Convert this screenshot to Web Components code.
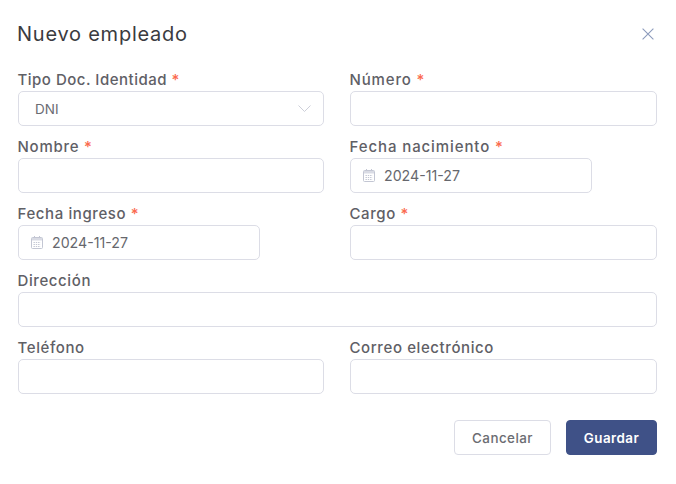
<!DOCTYPE html>
<html lang="es">
<head>
<meta charset="utf-8">
<title>Nuevo empleado</title>
<style>
html,body{margin:0;padding:0;background:#fff}
body{font-family:Inter,"Noto Sans",sans-serif;color:#5f6066}
</style>
</head>
<body>
<employee-dialog heading="Nuevo empleado">
  <form-field label="Tipo Doc. Identidad" required style="--track:.5px"><select-box value="DNI"></select-box></form-field>
  <form-field label="Número" required style="--track:.85px"><text-box></text-box></form-field>
  <form-field label="Nombre" required style="--track:.75px"><text-box></text-box></form-field>
  <form-field label="Fecha nacimiento" required style="--track:.9px"><date-box value="2024-11-27"></date-box></form-field>
  <form-field label="Fecha ingreso" required><date-box value="2024-11-27"></date-box></form-field>
  <form-field label="Cargo" required><text-box></text-box></form-field>
  <form-field label="Dirección" wide><text-box></text-box></form-field>
  <form-field label="Teléfono"><text-box></text-box></form-field>
  <form-field label="Correo electrónico"><text-box></text-box></form-field>
  <app-button slot="actions">Cancelar</app-button>
  <app-button slot="actions" primary>Guardar</app-button>
</employee-dialog>
<script>
const boxCss = `
  :host{display:block;box-sizing:border-box;height:35px;background:#fff;border:1px solid #dcdde6;border-radius:5px;}
`;
function def(name, render){
  customElements.define(name, class extends HTMLElement{
    connectedCallback(){
      if(this.shadowRoot) return;
      this.attachShadow({mode:'open'}).innerHTML = render(this);
    }
  });
}
def('employee-dialog', el => `
  <style>
    :host{display:block;box-sizing:border-box;width:676px;height:484px;padding:20px 19px 0 18px;background:#fff}
    header{display:flex;align-items:center;justify-content:space-between;height:28px;margin-bottom:11px}
    h1{margin:0 0 0 -1px;font:400 20px/28px Inter,"Noto Sans",sans-serif;color:#3a3b40;letter-spacing:.76px}
    button{all:unset;display:flex;width:18px;height:18px;align-items:center;justify-content:center}
    .grid{display:grid;grid-template-columns:306fr 307fr;column-gap:26px}
    footer{display:flex;justify-content:flex-end;gap:15px;margin-top:26px}
  </style>
  <header><h1>${el.getAttribute('heading')}</h1>
    <button aria-label="Cerrar"><svg width="12" height="12" viewBox="0 0 12 12" fill="none" stroke="#8c9bbc" stroke-width="1.1"><path d="M.6.6l10.8 10.8M11.4.6L.6 11.4"/></svg></button>
  </header>
  <div class="grid"><slot></slot></div>
  <footer><slot name="actions"></slot></footer>
`);
customElements.define('form-field', class extends HTMLElement{
  connectedCallback(){
    if(this.shadowRoot) return;
    if(this.hasAttribute('wide')) this.style.gridColumn='1 / -1';
    this.attachShadow({mode:'open'}).innerHTML = `
    <style>
      :host{display:block;height:67px}
      label{display:block;height:32px;font:500 15px/41px Inter,"Noto Sans",sans-serif;color:#5f6066;white-space:nowrap;letter-spacing:var(--track,.6px);margin-left:-.5px}
      b{font-weight:500;color:#fb6a4e}
    </style>
    <label>${this.getAttribute('label')}${this.hasAttribute('required')?' <b>*</b>':''}</label><slot></slot>`;
  }
});
def('text-box', () => `<style>${boxCss}</style>`);
def('select-box', el => `
  <style>${boxCss}
    :host{display:flex;align-items:center;justify-content:space-between;padding:0 12px 0 16px;font:400 13.5px Inter,"Noto Sans",sans-serif;color:#6b6c72}
  </style>
  <span>${el.getAttribute('value')}</span>
  <svg width="13" height="7" viewBox="0 0 13 7" fill="none" stroke="#cdcfd9" stroke-width="1"><path d="M.5.5l6 6 6-6"/></svg>
`);
def('date-box', el => `
  <style>${boxCss}
    :host{display:flex;align-items:center;width:242px;padding:0 12px;gap:9px;font:400 14.2px Inter,"Noto Sans",sans-serif;color:#66676d}
  </style>
  <svg width="12" height="13" viewBox="0 0 12 13" fill="none" stroke="#c3c6d3" stroke-width="1"><rect x=".5" y="1.5" width="11" height="11" rx="1"/><path d="M1 2h10v2.5H1z" fill="#d9dbe4" stroke="none"/><path d="M3.5 0v2M8.5 0v2"/><path d="M2.5 6.5h7M2.5 8.5h7M2.5 10.5h7" stroke-dasharray="1.4 .9"/></svg>
  <span>${el.getAttribute('value')}</span>
`);
def('app-button', el => `
  <style>
    :host{display:flex;align-items:center;justify-content:center;box-sizing:border-box;height:35px;border-radius:4px;letter-spacing:.45px;
      font:${el.hasAttribute('primary')?'600':'500'} 13.4px Inter,"Noto Sans",sans-serif;
      width:${el.hasAttribute('primary')?'91px':'97px'};
      background:${el.hasAttribute('primary')?'#3f5187':'#fff'};
      color:${el.hasAttribute('primary')?'#fff':'#6b6c72'};
      border:1px solid ${el.hasAttribute('primary')?'#3f5187':'#dcdde6'}}
  </style><slot></slot>
`);
</script>
</body>
</html>
